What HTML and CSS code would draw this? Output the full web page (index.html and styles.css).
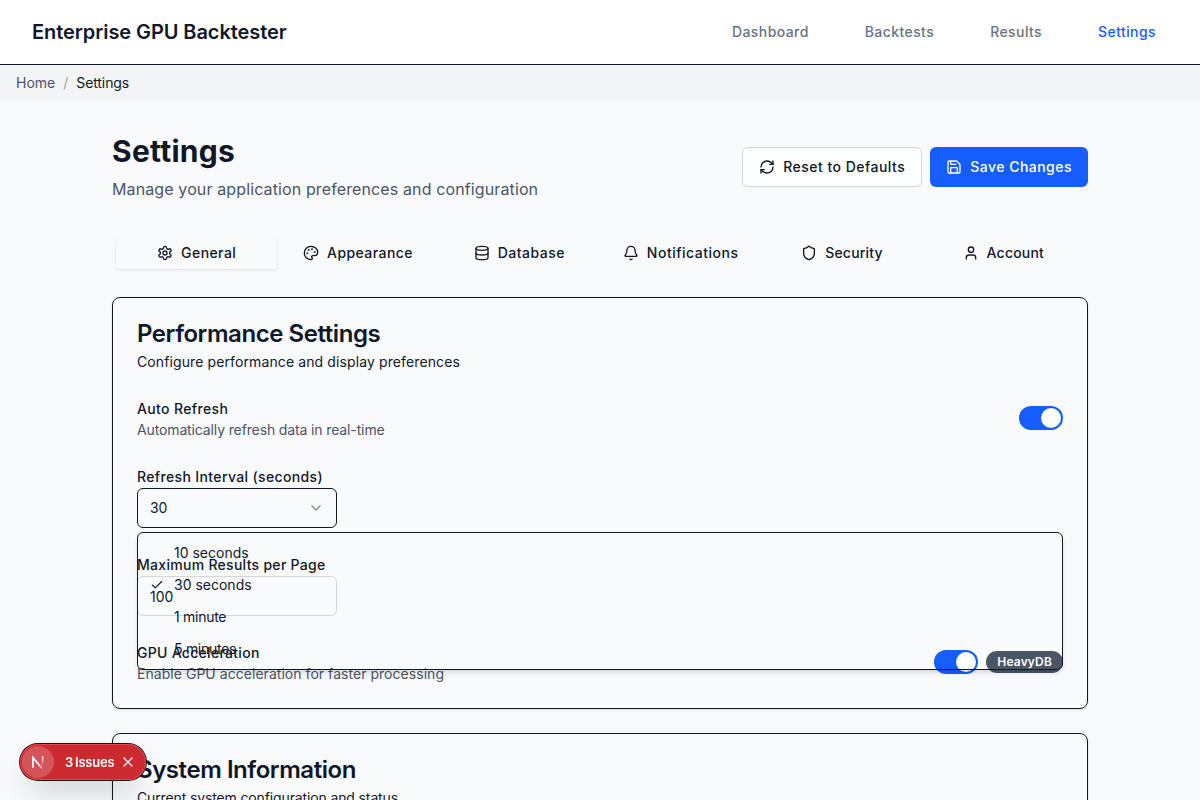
FILE: index.html
```html
<!DOCTYPE html>
<html lang="en">
<head>
<meta charset="utf-8">
<title>Settings</title>
<link rel="stylesheet" href="styles.css">
</head>
<body>
<header class="topbar">
  <div class="brand">Enterprise GPU Backtester</div>
  <nav class="nav">
    <a>Dashboard</a><a>Backtests</a><a>Results</a><a class="current">Settings</a>
  </nav>
</header>
<div class="crumbs"><span>Home</span><span class="slash">/</span><span class="here">Settings</span></div>
<main class="page">
  <div class="page-head">
    <div>
      <h1>Settings</h1>
      <p class="subtitle">Manage your application preferences and configuration</p>
    </div>
    <div class="actions">
      <button class="btn outline"><svg class="icon" viewBox="0 0 24 24"><path d="M3 12a9 9 0 0 1 9-9 9.75 9.75 0 0 1 6.74 2.74L21 8"/><path d="M21 3v5h-5"/><path d="M21 12a9 9 0 0 1-9 9 9.75 9.75 0 0 1-6.74-2.74L3 16"/><path d="M8 16H3v5"/></svg>Reset to Defaults</button>
      <button class="btn primary"><svg class="icon" viewBox="0 0 24 24"><path d="M15.2 3a2 2 0 0 1 1.4.6l3.8 3.8a2 2 0 0 1 .6 1.4V19a2 2 0 0 1-2 2H5a2 2 0 0 1-2-2V5a2 2 0 0 1 2-2z"/><path d="M17 21v-7a1 1 0 0 0-1-1H8a1 1 0 0 0-1 1v7"/><path d="M7 3v4a1 1 0 0 0 1 1h7"/></svg>Save Changes</button>
    </div>
  </div>
  <div class="tabs">
    <div class="tab active"><svg class="icon" viewBox="0 0 24 24"><path d="M12.22 2h-.44a2 2 0 0 0-2 2v.18a2 2 0 0 1-1 1.73l-.43.25a2 2 0 0 1-2 0l-.15-.08a2 2 0 0 0-2.73.73l-.22.38a2 2 0 0 0 .73 2.73l.15.1a2 2 0 0 1 1 1.72v.51a2 2 0 0 1-1 1.74l-.15.09a2 2 0 0 0-.73 2.73l.22.38a2 2 0 0 0 2.73.73l.15-.08a2 2 0 0 1 2 0l.43.25a2 2 0 0 1 1 1.73V20a2 2 0 0 0 2 2h.44a2 2 0 0 0 2-2v-.18a2 2 0 0 1 1-1.73l.43-.25a2 2 0 0 1 2 0l.15.08a2 2 0 0 0 2.73-.73l.22-.39a2 2 0 0 0-.73-2.73l-.15-.08a2 2 0 0 1-1-1.74v-.5a2 2 0 0 1 1-1.74l.15-.09a2 2 0 0 0 .73-2.73l-.22-.38a2 2 0 0 0-2.73-.73l-.15.08a2 2 0 0 1-2 0l-.43-.25a2 2 0 0 1-1-1.73V4a2 2 0 0 0-2-2z"/><circle cx="12" cy="12" r="3"/></svg>General</div>
    <div class="tab"><svg class="icon" viewBox="0 0 24 24"><path d="M12 22a1 1 0 0 1 0-20 10 9 0 0 1 10 9 5 5 0 0 1-5 5h-2.250a1.750 1.750 0 0 0-1.400 2.800l.3.4a1.750 1.750 0 0 1-1.400 2.800z"/><circle cx="13.500" cy="6.500" r=".5"/><circle cx="17.500" cy="10.500" r=".5"/><circle cx="6.500" cy="12.500" r=".5"/><circle cx="8.500" cy="7.500" r=".5"/></svg>Appearance</div>
    <div class="tab wide"><svg class="icon" viewBox="0 0 24 24"><ellipse cx="12" cy="5" rx="9" ry="3"/><path d="M3 5v14a9 3 0 0 0 18 0V5"/><path d="M3 12a9 3 0 0 0 18 0"/></svg>Database</div>
    <div class="tab wide"><svg class="icon" viewBox="0 0 24 24"><path d="M10.268 21a2 2 0 0 0 3.464 0"/><path d="M3.262 15.326A1 1 0 0 0 4 17h16a1 1 0 0 0 .74-1.673C19.410 13.956 18 12.499 18 8A6 6 0 0 0 6 8c0 4.499-1.411 5.956-2.738 7.326"/></svg>Notifications</div>
    <div class="tab narrow"><svg class="icon" viewBox="0 0 24 24"><path d="M20 13c0 5-3.500 7.500-7.660 8.950a1 1 0 0 1-.67-.01C7.500 20.500 4 18 4 13V6a1 1 0 0 1 1-1c2 0 4.500-1.200 6.240-2.720a1.170 1.170 0 0 1 1.520 0C14.510 3.810 17 5 19 5a1 1 0 0 1 1 1z"/></svg>Security</div>
    <div class="tab narrow"><svg class="icon" viewBox="0 0 24 24"><path d="M19 21v-2a4 4 0 0 0-4-4H9a4 4 0 0 0-4 4v2"/><circle cx="12" cy="7" r="4"/></svg>Account</div>
  </div>
  <section class="card">
    <h3>Performance Settings</h3>
    <p class="card-desc">Configure performance and display preferences</p>
    <div class="fields">
      <div class="row">
        <div><div class="label">Auto Refresh</div><p class="hint tight">Automatically refresh data in real-time</p></div>
        <div class="switch"><span class="thumb"></span></div>
      </div>
      <div class="select-field">
        <div class="label">Refresh Interval (seconds)</div>
        <div class="select">30<svg class="icon chevron" viewBox="0 0 24 24"><path d="m6 9 6 6 6-6"/></svg></div>
        <div class="menu">
          <div class="option">10 seconds</div>
          <div class="option"><svg class="icon check" viewBox="0 0 24 24"><path d="M20 6 9 17l-5-5"/></svg>30 seconds</div>
          <div class="option minutes">1 minute</div>
          <div class="option minutes">5 minutes</div>
        </div>
      </div>
      <div>
        <div class="label snug">Maximum Results per Page</div>
        <div class="input">100</div>
      </div>
      <div class="row">
        <div><div class="label snug">GPU Acceleration</div><p class="hint">Enable GPU acceleration for faster processing</p></div>
        <div class="cluster"><div class="switch"><span class="thumb"></span></div><span class="badge">HeavyDB</span></div>
      </div>
    </div>
  </section>
  <section class="card">
    <h3>System Information</h3>
    <p class="card-desc tight">Current system configuration and status</p>
  </section>
</main>
<div class="issues">
  <span class="mark"><svg width="32" height="32" viewBox="0 0 32 32" fill="none">
    <defs>
      <linearGradient id="fade-diagonal" x1="17" y1="17" x2="22" y2="23" gradientUnits="userSpaceOnUse"><stop stop-color="#fff"/><stop offset="1" stop-color="#fff" stop-opacity="0"/></linearGradient>
      <linearGradient id="fade-stem" x1="21" y1="10" x2="21" y2="20" gradientUnits="userSpaceOnUse"><stop stop-color="#fff"/><stop offset="1" stop-color="#fff" stop-opacity="0"/></linearGradient>
    </defs>
    <path d="M10.900 21.800V11.500L17.200 19" stroke="#fff" stroke-width="1.700"/>
    <path d="M16.700 18.400L20.800 23.200" stroke="url(#fade-diagonal)" stroke-width="1.700"/>
    <path d="M20.600 10.300V20" stroke="url(#fade-stem)" stroke-width="1.600"/>
  </svg></span>
  <span class="count">3</span><span class="word">Issues</span>
  <svg class="close" viewBox="0 0 12 12"><path d="M1.500 1.500l9 9M10.500 1.500l-9 9"/></svg>
</div>
</body>
</html>
```
FILE: styles.css
```css
* { box-sizing: border-box; }
body {
  margin: 0;
  height: 800px;
  overflow: hidden;
  background: #f9fafc;
  color: #101828;
  font: 14px/20px Inter, sans-serif;
}
h1, h3, p { margin: 0; }
.icon {
  width: 16px;
  height: 16px;
  flex: none;
  fill: none;
  stroke: currentColor;
  stroke-width: 2;
  stroke-linecap: round;
  stroke-linejoin: round;
}
.topbar {
  display: flex;
  align-items: center;
  justify-content: space-between;
  height: 65px;
  padding: 0 44px 0 32px;
  background: #fff;
  border-bottom: 1px solid #101828;
}
.brand { font-size: 20px; line-height: 28px; font-weight: 600; letter-spacing: -0.08px; }
.nav { display: flex; gap: 56px; color: #6a7282; font-weight: 500; letter-spacing: 0.42px; }
.nav .current { color: #155dfc; }
.crumbs {
  display: flex;
  gap: 8px;
  height: 36px;
  padding: 8px 16px;
  background: #f3f4f6;
  color: #4a5565;
}
.crumbs .slash { color: #99a1af; }
.crumbs .here { color: #101828; letter-spacing: -0.1px; }
.page { width: 1024px; height: 699px; overflow: hidden; margin: 0 auto; padding: 32px 24px; }
.page-head { display: flex; align-items: center; justify-content: space-between; }
h1 { font-size: 30px; line-height: 36px; font-weight: 700; letter-spacing: 0.25px; }
.subtitle { margin-top: 8px; font-size: 16px; line-height: 24px; letter-spacing: 0.12px; color: #4a5565; }
.actions { display: flex; gap: 8px; }
.btn {
  display: flex;
  align-items: center;
  gap: 8px;
  height: 40px;
  padding: 0 16px;
  border: 1px solid transparent;
  border-radius: 6px;
  font: 500 14px/20px Inter, sans-serif;
  letter-spacing: 0.48px;
}
.outline { background: #fff; border-color: #d1d5dc; color: #101828; }
.primary { background: #155dfc; color: #fff; border: 0; }
.tabs {
  display: grid;
  grid-template-columns: repeat(6, 1fr);
  height: 40px;
  margin: 32px 0 24px;
  padding: 4px;
}
.tab {
  display: flex;
  align-items: center;
  justify-content: center;
  gap: 8px;
  border-radius: 4px;
  font-weight: 500;
  letter-spacing: 0.42px;
}
.tab.wide { letter-spacing: 0.5px; }
.tab.narrow { letter-spacing: 0.2px; }
.active { box-shadow: 0 1px 3px rgb(0 0 0 / 10%), 0 1px 2px -1px rgb(0 0 0 / 10%); }
.card {
  margin-bottom: 24px;
  padding: 24px;
  border: 1px solid #101828;
  border-radius: 8px;
  box-shadow: 0 1px 3px rgb(0 0 0 / 10%), 0 1px 2px -1px rgb(0 0 0 / 10%);
}
h3 { font-size: 24px; line-height: 24px; font-weight: 600; letter-spacing: -0.44px; }
.card-desc { margin-top: 6px; letter-spacing: 0.11px; }
.fields { display: flex; flex-direction: column; gap: 24px; margin-top: 24px; }
.row { display: flex; align-items: center; justify-content: space-between; }
.label { padding-top: 3px; height: 24px; font-weight: 500; letter-spacing: 0.36px; }
.label.snug { letter-spacing: 0.29px; }
.hint { color: #4a5565; letter-spacing: 0.04px; }
.tight { letter-spacing: -0.13px; }
.switch { width: 44px; height: 24px; padding: 2px; border-radius: 12px; background: #155dfc; }
.thumb { display: block; width: 20px; height: 20px; margin-left: 20px; border-radius: 50%; background: #fff; }
.select-field { position: relative; }
.select, .input {
  display: flex;
  align-items: center;
  justify-content: space-between;
  width: 200px;
  height: 40px;
  padding: 0 12px;
  border: 1px solid #101828;
  border-radius: 6px;
  letter-spacing: -0.2px;
}
.input { padding-top: 2px; border-color: #d1d5dc; letter-spacing: 0; }
.chevron { opacity: 0.5; }
.menu {
  position: absolute;
  z-index: 2;
  top: 68px;
  left: 0;
  right: 0;
  padding: 4px;
  border: 1px solid #101828;
  border-radius: 6px;
  box-shadow: 0 4px 6px -1px rgb(0 0 0 / 10%), 0 2px 4px -2px rgb(0 0 0 / 10%);
}
.option { position: relative; padding: 6px 8px 6px 32px; }
.minutes { letter-spacing: -0.28px; }
.check { position: absolute; left: 8px; top: 9px; width: 14px; height: 14px; }
.cluster { display: flex; align-items: center; gap: 8px; }
.badge {
  padding: 3px 11px;
  border-radius: 11px;
  background: #4a5565;
  color: #fff;
  font-size: 12px;
  line-height: 16px;
  font-weight: 600;
  letter-spacing: 0.16px;
}
.issues {
  position: fixed;
  z-index: 5;
  left: 20px;
  top: 744px;
  display: flex;
  align-items: center;
  width: 126px;
  height: 36px;
  padding: 2px;
  border-radius: 18px;
  background: #ca2a30;
  color: #fff;
  font-size: 13px;
  font-weight: 600;
  letter-spacing: -0.2px;
  box-shadow: 0 0 0 1px #171717, inset 0 0 0 1px #e5484d, 0 16px 32px -8px rgb(0 0 0 / 24%);
}
.mark { width: 32px; height: 32px; border-radius: 50%; background: rgb(255 255 255 / 20%); }
.mark svg { display: block; }
.count { width: 8px; margin-left: 11px; }
.word { width: 39px; margin-left: 2px; }
.close { width: 12px; height: 12px; margin-left: 8px; fill: none; stroke: #fff; stroke-width: 1.2; }
```
